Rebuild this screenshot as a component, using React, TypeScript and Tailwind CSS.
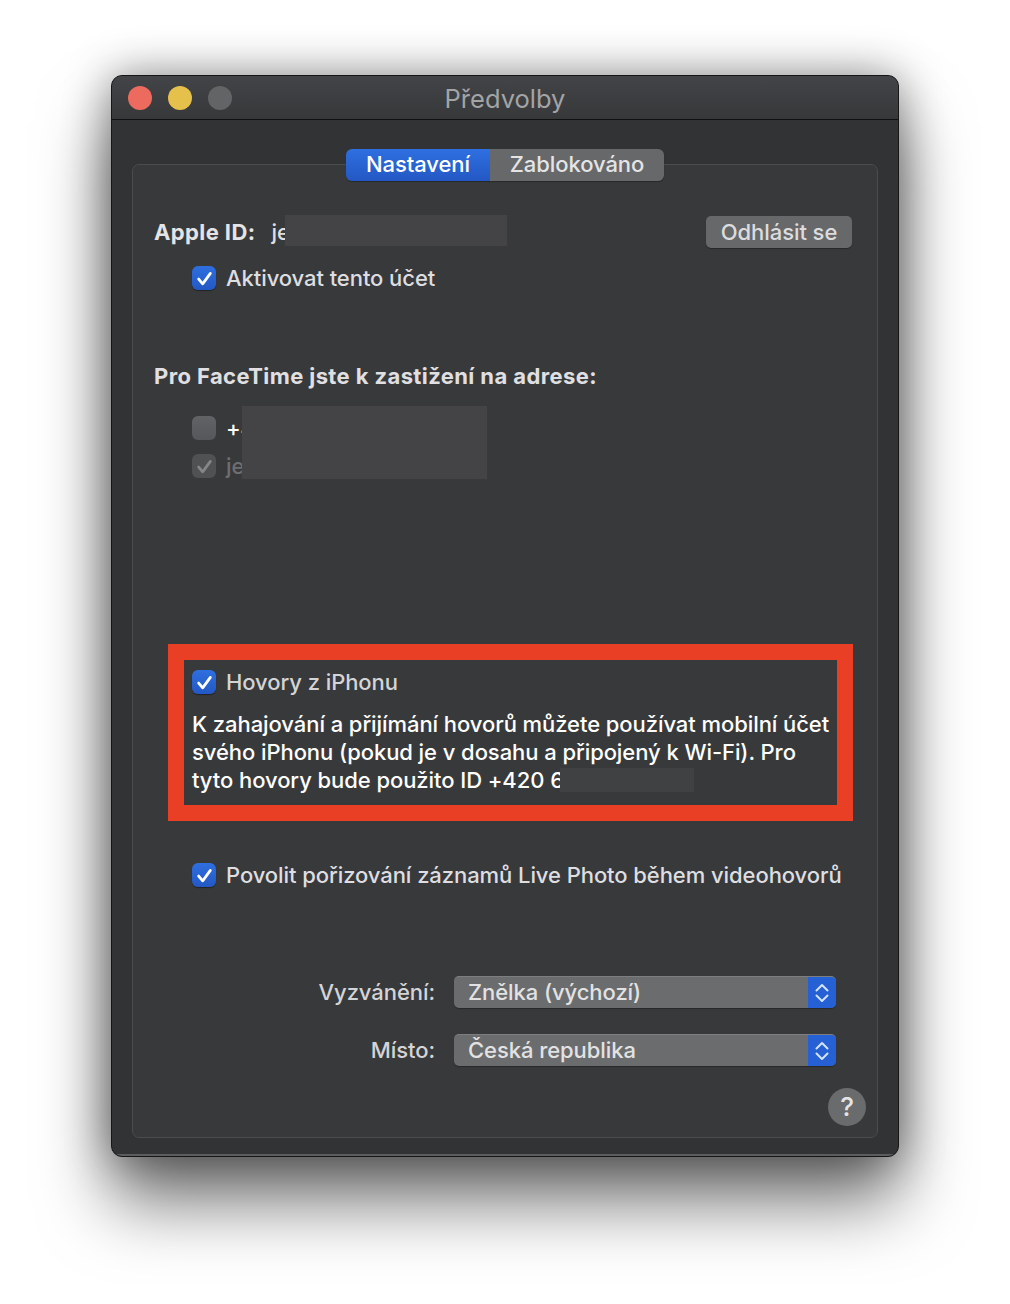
const Check = ({ color = '#ffffff' }: { color?: string }) => (
  <svg className="w-[17px] h-[17px]" viewBox="0 0 16 16" fill="none">
    <path d="M2.5 8.5L6.3 13L13.5 3.2" stroke={color} strokeWidth="2.6" strokeLinecap="round" strokeLinejoin="round" />
  </svg>
);

const BlueCheckbox = () => (
  <div className="w-6 h-6 shrink-0 rounded-[6px] flex items-center justify-center bg-gradient-to-b from-[#2f6fe0] to-[#2358c4] shadow-[0_1px_1px_rgba(0,0,0,0.4)]">
    <Check />
  </div>
);

const Select = ({ value }: { value: string }) => (
  <div className="w-[382px] h-8 flex rounded-[5px] overflow-hidden bg-[#6b6c6d] border-t border-[#7d7e7f] shadow-[0_1px_1px_rgba(0,0,0,0.3)]">
    <div className="flex-1 pl-[14px] leading-[30px] text-[#e2e2e3]">{value}</div>
    <div className="w-7 flex items-center justify-center bg-[#2560d4]">
      <svg className="w-[14px] h-5" viewBox="0 0 14 20" fill="none" stroke="#d3e2ff" strokeWidth="2" strokeLinecap="round" strokeLinejoin="round">
        <path d="M1.5 7.5L7 2L12.5 7.5" />
        <path d="M1.5 12.5L7 18L12.5 12.5" />
      </svg>
    </div>
  </div>
);

export default function App() {
  return (
    <div className="w-[1010px] h-[1304px] bg-white pt-[75px] pl-[111px] overflow-hidden font-['Inter','Liberation_Sans',sans-serif]">
      {/* Window */}
      <div className="w-[788px] h-[1082px] flex flex-col rounded-[11px] overflow-hidden border border-[#161617] bg-[#323335] shadow-[0_45px_70px_rgba(0,0,0,0.55),0_0_45px_rgba(0,0,0,0.42)]">
        {/* Title bar */}
        <div className="relative h-[44px] shrink-0 flex items-center pl-[16px] gap-4 border-b border-[#101011] bg-gradient-to-b from-[#434447] to-[#37383a]">
          <div className="w-6 h-6 rounded-full bg-[#ed6a5e]" />
          <div className="w-6 h-6 rounded-full bg-[#e5c04b]" />
          <div className="w-6 h-6 rounded-full bg-[#636466]" />
          <div className="absolute inset-0 text-center text-[25.5px] leading-[46px] text-[#a3a4a6]">Předvolby</div>
        </div>

        {/* Tab panel */}
        <div className="flex-1 px-5 pt-[44px] pb-[16px] border-b-2 border-[#5c5d5f]">
          <div className="relative h-full rounded-[7px] border border-[#4b4c4e] bg-[#38393b] text-[#dedee0] text-[22px] leading-6 font-[450] tracking-[-0.07px]">
            {/* Tabs */}
            <div className="absolute -top-[16px] left-[213px] w-[318px] h-8 flex rounded-[6px] overflow-hidden shadow-[0_1px_1px_rgba(0,0,0,0.3)]">
              <div className="w-[144px] text-center leading-[31px] text-white bg-gradient-to-b from-[#2f6fe0] to-[#2358c4]">Nastavení</div>
              <div className="flex-1 text-center leading-[31px] text-[#e4e4e5] bg-[#67686a]">Zablokováno</div>
            </div>

            {/* Apple ID */}
            <div className="relative flex items-center justify-between h-8 mt-[51px] ml-[21px] mr-[25px]">
              <div className="flex items-center">
                <span className="font-bold tracking-[0.4px] text-[#e4e4e6]">Apple ID:</span>
                <span className="ml-[16px]">je</span>
              </div>
              <div className="w-[146px] h-8 rounded-[5px] text-center leading-8 text-[#dcdcde] bg-[#67686a] shadow-[0_1px_1px_rgba(0,0,0,0.3)]">Odhlásit se</div>
              <div className="absolute left-[131px] -top-px w-[222px] h-[31px] bg-[#444446]" />
            </div>

            <div className="flex items-center gap-[10px] mt-[18px] ml-[59px]">
              <BlueCheckbox />
              <span>Aktivovat tento účet</span>
            </div>

            <div className="mt-[72px] ml-[21px] font-bold tracking-[0.4px] text-[#e0e0e2] leading-7">Pro FaceTime jste k zastižení na adrese:</div>

            {/* FaceTime addresses */}
            <div className="relative mt-[26px] ml-[59px] flex flex-col gap-[14px]">
              <div className="flex items-center gap-[10px]">
                <div className="w-6 h-6 rounded-[6px] bg-gradient-to-b from-[#626365] to-[#56575a]" />
                <span className="text-white">+420</span>
              </div>
              <div className="flex items-center gap-[10px] text-[#6d6e70]">
                <div className="w-6 h-6 rounded-[6px] flex items-center justify-center bg-[#505153]">
                  <Check color="#858688" />
                </div>
                <span>je</span>
              </div>
              <div className="absolute left-[50px] -top-[10px] w-[245px] h-[73px] bg-[#444446]" />
            </div>

            {/* Highlighted by the red frame */}
            <div className="relative mt-[166px] ml-[35px] w-[685px] h-[177px] border-[16px] border-[#e93f24] pl-2 pt-[10px] text-[#d4d4d6]">
              <div className="flex items-center gap-[10px]">
                <BlueCheckbox />
                <span>Hovory z iPhonu</span>
              </div>
              <div className="mt-[16px] leading-[28px] text-white whitespace-nowrap">
                <div>K zahajování a přijímání hovorů můžete používat mobilní účet</div>
                <div>svého iPhonu (pokud je v dosahu a připojený k Wi-Fi). Pro</div>
                <div>tyto hovory bude použito ID +420 6</div>
              </div>
              <div className="absolute left-[376px] top-[108px] w-[134px] h-[24px] bg-[#404143]" />
            </div>

            <div className="flex items-center gap-[10px] mt-[42px] ml-[59px] whitespace-nowrap">
              <BlueCheckbox />
              <span>Povolit pořizování záznamů Live Photo během videohovorů</span>
            </div>

            {/* Popups */}
            <div className="mt-[89px] flex items-center">
              <span className="w-[302px] text-right text-[#d4d4d6]">Vyzvánění:</span>
              <div className="ml-[19px]"><Select value="Znělka (výchozí)" /></div>
            </div>
            <div className="mt-[26px] flex items-center">
              <span className="w-[302px] text-right text-[#d4d4d6]">Místo:</span>
              <div className="ml-[19px]"><Select value="Česká republika" /></div>
            </div>

            <div className="flex justify-end mt-[22px] mr-[11px]">
              <div className="w-[38px] h-[38px] rounded-full bg-[#6a6b6c] text-center text-[26px] leading-[38px] text-[#e4e4e5]">?</div>
            </div>
          </div>
        </div>
      </div>
    </div>
  );
}
